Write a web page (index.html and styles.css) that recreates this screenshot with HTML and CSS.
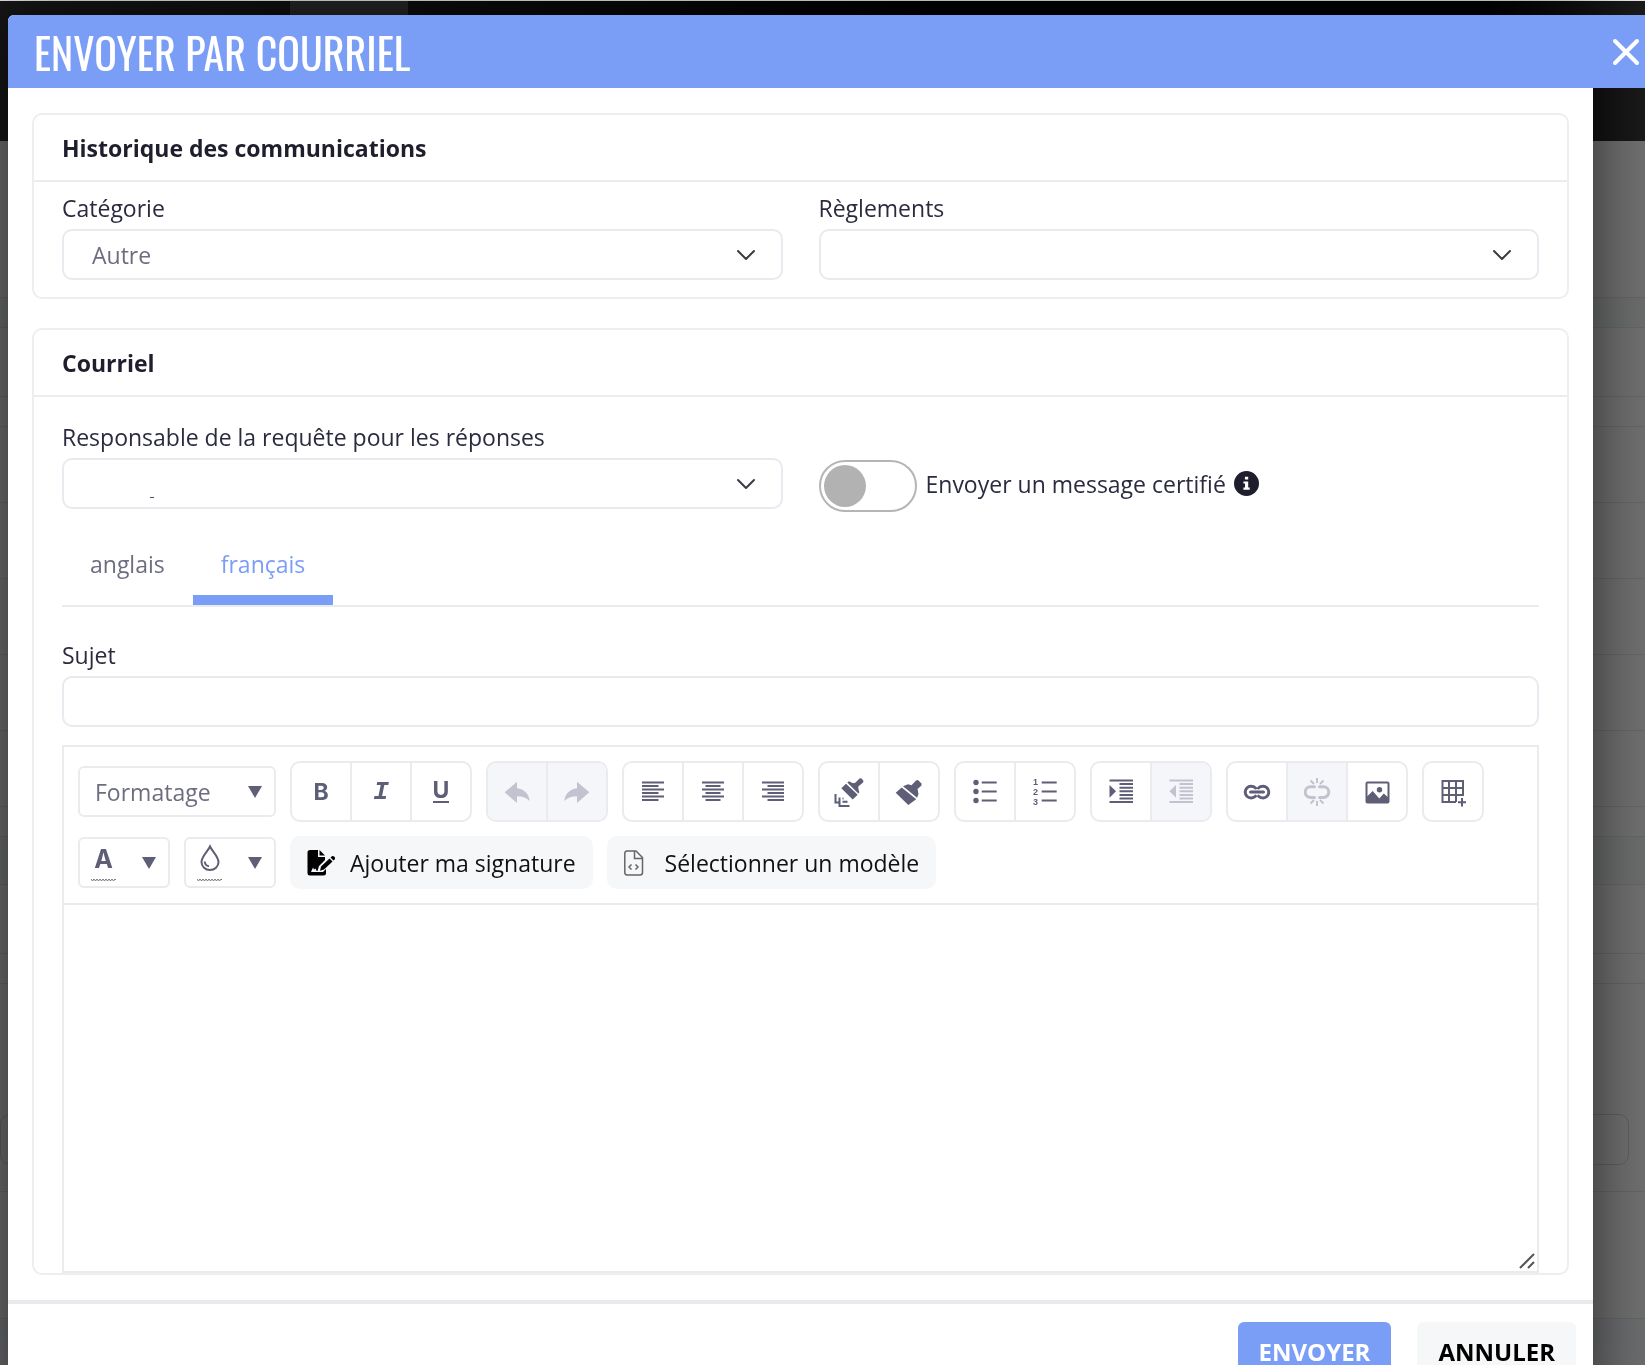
FILE: index.html
```html
<!DOCTYPE html>
<html lang="fr">
<head>
  <meta charset="UTF-8">
  <meta name="viewport" content="width=device-width, initial-scale=1.0">
  <title>Envoyer par courriel</title>
  <link rel="stylesheet" href="styles.css">
</head>
<body>
  <!-- ======= Page behind the modal ======= -->
  <div class="backdrop" aria-hidden="true">
    <div class="backdrop-nav"><div class="backdrop-photo"></div></div>
    <div class="backdrop-row tall"></div>
    <div class="backdrop-row gap"></div>
    <div class="backdrop-row head"></div>
    <div class="backdrop-row thin"></div>
    <div class="backdrop-row"></div>
    <div class="backdrop-row"></div>
    <div class="backdrop-row"></div>
    <div class="backdrop-row"></div>
    <div class="backdrop-row"></div>
    <div class="backdrop-row thin"></div>
    <div class="backdrop-row gap wide"></div>
    <div class="backdrop-row head"></div>
    <div class="backdrop-row thin"></div>
    <div class="backdrop-row form"><div class="backdrop-field"></div></div>
    <div class="backdrop-row big"></div>
    <div class="backdrop-row gap rest"></div>
  </div>

  <!-- ======= Modal ======= -->
  <div class="modal" role="dialog" aria-labelledby="modalTitle">
    <header class="modal-header">
      <h1 id="modalTitle">ENVOYER PAR COURRIEL</h1>
      <button class="close-btn" type="button" aria-label="Fermer">
        <svg width="28" height="28" viewBox="0 0 28 28"><path d="M3 3l22 22M25 3L3 25"/></svg>
      </button>
    </header>

    <form class="modal-form">
      <div class="modal-body">
        <!-- Historique -->
        <section class="card">
          <h2 class="card-header">Historique des communications</h2>
          <div class="card-body compact">
            <div class="row">
              <div class="field">
                <label for="categorie">Catégorie</label>
                <div class="select-wrap">
                  <select id="categorie"><option>Autre</option></select>
                  <svg class="chevron" width="20" height="12" viewBox="0 0 20 12"><path d="M2 2l8 8 8-8"/></svg>
                </div>
              </div>
              <div class="field">
                <label for="reglements">Règlements</label>
                <div class="select-wrap">
                  <select id="reglements"><option></option></select>
                  <svg class="chevron" width="20" height="12" viewBox="0 0 20 12"><path d="M2 2l8 8 8-8"/></svg>
                </div>
              </div>
            </div>
          </div>
        </section>

        <!-- Courriel -->
        <section class="card">
          <h2 class="card-header">Courriel</h2>
          <div class="card-body">
            <div class="row">
              <div class="field">
                <label for="responsable">Responsable de la requête pour les réponses</label>
                <div class="select-wrap">
                  <select id="responsable"><option></option></select>
                  <span class="select-mark"></span>
                  <svg class="chevron" width="20" height="12" viewBox="0 0 20 12"><path d="M2 2l8 8 8-8"/></svg>
                </div>
              </div>
              <div class="switch-field">
                <input class="switch" type="checkbox" id="certifie">
                <label for="certifie">Envoyer un message certifié</label>
                <svg class="info" width="25" height="25" viewBox="0 0 25 25">
                  <circle cx="12.500" cy="12.500" r="12.500" fill="#1e1e2d"/>
                  <path d="M10.900 5.800h3.300v2.800h-3.300zM9.400 10.400h4.800v6.200h1.500v2.200H9.400v-2.200h1.600v-4H9.400z" fill="#fff"/>
                </svg>
              </div>
            </div>

            <div class="tabs" role="tablist">
              <button class="tab" type="button" role="tab" aria-selected="false">anglais</button>
              <button class="tab active" type="button" role="tab" aria-selected="true">français</button>
            </div>

            <div class="field subject">
              <label for="sujet">Sujet</label>
              <input class="text-input" type="text" id="sujet">
            </div>

            <!-- Éditeur -->
            <div class="editor">
              <div class="toolbar">
                <button class="tool-drop format" type="button"><span>Formatage</span><i class="caret"></i></button>

                <div class="tool-group">
                  <button type="button" class="letter bold" aria-label="Gras">B</button>
                  <button type="button" class="letter italic" aria-label="Italique">I</button>
                  <button type="button" class="letter underline" aria-label="Souligné"><span>U</span></button>
                </div>

                <div class="tool-group">
                  <button type="button" disabled aria-label="Annuler l'action">
                    <svg class="icon" viewBox="0 0 30 30"><path class="fill" d="M2.700 15.300L15 4.700v6.600c7 .7 12 5.700 12.700 12.700-3.700-3.500-7.700-4.700-12.700-4.700V26z"/></svg>
                  </button>
                  <button type="button" disabled aria-label="Rétablir">
                    <svg class="icon" viewBox="0 0 30 30"><path class="fill" d="M27.300 15.300L15 4.700v6.600C8 12 3 17 2.300 24 6 20.500 10 19.300 15 19.300V26z"/></svg>
                  </button>
                </div>

                <div class="tool-group">
                  <button type="button" aria-label="Aligner à gauche">
                    <svg class="icon" viewBox="0 0 30 30"><path d="M4 5.500h22M4 9h16.500M4 12.500h22M4 16h16.500M4 19.500h22M4 23h16.500"/></svg>
                  </button>
                  <button type="button" aria-label="Centrer">
                    <svg class="icon" viewBox="0 0 30 30"><path d="M4 5.500h22M7.500 9h15M4 12.500h22M7.500 16h15M4 19.500h22M7.500 23h15"/></svg>
                  </button>
                  <button type="button" aria-label="Aligner à droite">
                    <svg class="icon" viewBox="0 0 30 30"><path d="M4 5.500h22M9.500 9H26M4 12.500h22M9.500 16H26M4 19.500h22M9.500 23H26"/></svg>
                  </button>
                </div>

                <div class="tool-group">
                  <button type="button" aria-label="Copier la mise en forme">
                    <svg class="icon" viewBox="0 0 30 30">
                      <path class="fill" d="M7.300 11.300L12 6.800l11.700 11-5 4.800zM13.300 5.600L15 4.300l4 2 2.300-.6 4.200-4.200 1.800-.2 2 2.300v1.600l-5 4.400.2 3 .8 2.600-1 1.400z"/>
                      <path d="M1.500 17v8.500h4M5.500 20.500V29h10M8.500 21.500h1M8.500 24.800h5"/>
                    </svg>
                  </button>
                  <button type="button" aria-label="Appliquer la mise en forme">
                    <svg class="icon" viewBox="0 0 30 30">
                      <path class="fill" d="M1.700 15.800l6-5.300 14.500 11.700-7.900 5.800zM9 9.300l5-2 3.500 1L22 3.400l2-.5 3.500 3.500v2l-4 3.500 1 5-1.400 3.800z"/>
                    </svg>
                  </button>
                </div>

                <div class="tool-group">
                  <button type="button" aria-label="Liste à puces">
                    <svg class="icon" viewBox="0 0 30 30">
                      <circle class="fill" cx="6" cy="5.500" r="2.700"/><circle class="fill" cx="6" cy="14.500" r="2.700"/><circle class="fill" cx="6" cy="23.500" r="2.700"/>
                      <path d="M11.700 5.500h15M11.700 14.500h15M11.700 23.500h15"/>
                    </svg>
                  </button>
                  <button type="button" aria-label="Liste numérotée">
                    <svg class="icon" viewBox="0 0 30 30">
                      <text x="3" y="8">1</text><text x="3" y="18">2</text><text x="3" y="28">3</text>
                      <path d="M11.700 5.500h15M11.700 14.500h15M11.700 23.500h15"/>
                    </svg>
                  </button>
                </div>

                <div class="tool-group">
                  <button type="button" aria-label="Augmenter le retrait">
                    <svg class="icon" viewBox="0 0 30 30">
                      <path d="M3.500 3.500H27M13.500 7H27M13.500 10.700H27M13.500 14.300H27M13.500 18H27M13.500 21.500H27M3.500 25H27"/>
                      <path class="fill" d="M3.500 8l6.500 6.300-6.500 6.400z"/>
                    </svg>
                  </button>
                  <button type="button" disabled aria-label="Diminuer le retrait">
                    <svg class="icon" viewBox="0 0 30 30">
                      <path d="M3.500 3.500H27M13.500 7H27M13.500 10.700H27M13.500 14.300H27M13.500 18H27M13.500 21.500H27M3.500 25H27"/>
                      <path class="fill" d="M10 8l-6.500 6.300 6.500 6.400z"/>
                    </svg>
                  </button>
                </div>

                <div class="tool-group">
                  <button type="button" aria-label="Insérer un lien">
                    <svg class="icon" viewBox="0 0 30 30">
                      <path class="thick" d="M13.500 11C12 9.500 10.800 9.300 9 9.300a5.800 5.800 0 0 0 0 11.600c1.800 0 3-.2 4.500-1.700M16.500 11c1.500-1.500 2.700-1.700 4.500-1.700a5.800 5.800 0 0 1 0 11.600c-1.800 0-3-.2-4.500-1.700M8.500 15.100h13"/>
                    </svg>
                  </button>
                  <button type="button" disabled aria-label="Supprimer le lien">
                    <svg class="icon" viewBox="0 0 30 30">
                      <path class="thick" d="M12.500 9.800H8.500a5.300 5.300 0 0 0 0 10.600h4M17.500 9.800h4a5.300 5.300 0 0 1 0 10.600h-4"/>
                      <path d="M15 1v5M8.500 3.500L12 7M21.500 3.500L18 7M15 24v5M8.500 26.500L12 23M21.500 26.500L18 23"/>
                    </svg>
                  </button>
                  <button type="button" aria-label="Insérer une image">
                    <svg class="icon" viewBox="0 0 30 30">
                      <rect x="4.500" y="5.500" width="22" height="20" rx="1"/>
                      <circle class="fill" cx="17.500" cy="12.700" r="2.700"/>
                      <path class="fill" d="M4 20.500l6.700-6.500 6.600 7.500 4.500-5 5 4.500v5H4z"/>
                    </svg>
                  </button>
                </div>

                <div class="tool-group">
                  <button type="button" aria-label="Insérer un tableau">
                    <svg class="icon" viewBox="0 0 30 30">
                      <path d="M18 25H4.500V4H25v14H4.500M4.500 11H25M11 4v21M18 4v21M24 21v8.500M20 25.300h8"/>
                    </svg>
                  </button>
                </div>

                <button class="tool-drop color" type="button" aria-label="Couleur du texte">
                  <span class="swatch">
                    <b>A</b>
                    <svg class="wave" width="25" height="4" viewBox="0 0 25 4"><path d="M0 1l1.500 2L3 1l1.500 2L6 1l1.500 2L9 1l1.500 2L12 1l1.500 2L15 1l1.500 2L18 1l1.500 2L21 1l1.500 2L24 1l1 1"/></svg>
                  </span>
                  <i class="caret"></i>
                </button>
                <button class="tool-drop color" type="button" aria-label="Couleur de fond">
                  <span class="swatch">
                    <svg class="drop" width="22" height="28" viewBox="0 0 22 28"><path d="M11 2.500C9 7 2.500 12.500 2.500 18a8.500 8 0 0 0 17 0C19.500 12.500 13 7 11 2.500zM5.700 17.500c.3 2.700 1.800 4.500 4.300 4.800"/></svg>
                    <svg class="wave" width="25" height="4" viewBox="0 0 25 4"><path d="M0 1l1.500 2L3 1l1.500 2L6 1l1.500 2L9 1l1.500 2L12 1l1.500 2L15 1l1.500 2L18 1l1.500 2L21 1l1.500 2L24 1l1 1"/></svg>
                  </span>
                  <i class="caret"></i>
                </button>

                <button class="tool-text" type="button">
                  <svg width="28" height="26" viewBox="0 0 28 26">
                    <path d="M3 0h8v7h7v3l-6 6-1.500 5-1-.2-1-2.300-1.500 1-1-2L4 22h12l3-3v4a2.500 2.500 0 0 1-2.500 2.500H3A2.500 2.500 0 0 1 .5 23V2.500A2.500 2.500 0 0 1 3 0z"/>
                    <path d="M12.500 0L18 5.500h-5.500zM22.500 8.500l3 3-8.500 8-4 1.200 1-4.200zM23.500 7.500L25 6.200c1.500-1 4 1.500 2.800 3l-1.300 1.300z"/>
                  </svg>
                  <span>Ajouter ma signature</span>
                </button>
                <button class="tool-text" type="button">
                  <svg width="26" height="26" viewBox="0 0 26 26" class="file">
                    <path d="M12 1H3A2.500 2.500 0 0 0 .8 3.500v19A2.500 2.500 0 0 0 3 25h13a2.500 2.500 0 0 0 2.500-2.500V7.500zM10.500 1v7.500h8M7.500 14.500L5 17l2.500 2.500M11.500 14.500l2.500 2.500-2.500 2.500"/>
                  </svg>
                  <span>Sélectionner un modèle</span>
                </button>
              </div>

              <div class="editor-area">
                <textarea aria-label="Message"></textarea>
                <svg class="resizer" width="18" height="18" viewBox="0 0 18 18"><path d="M2 16L16 2M10 16l6-6"/></svg>
              </div>
            </div>
          </div>
        </section>
      </div>

      <footer class="modal-footer">
        <button class="btn btn-primary" type="button">ENVOYER</button>
        <button class="btn btn-light" type="button">ANNULER</button>
      </footer>
    </form>
  </div>
</body>
</html>
```
FILE: styles.css
```css
/* ======= Reset & base ======= */
* {
  box-sizing: border-box;
  margin: 0;
  padding: 0;
}

html, body {
  height: 100%;
  overflow: hidden;
}
body {
  font-family: "Segoe UI", "Open Sans", "Noto Sans", sans-serif;
  font-size: 23px;
  line-height: 30px;
  color: #2b2b40;
  background: #6f6f6f;
}
button, input, select, textarea {
  font: inherit;
  color: inherit;
}
button {
  border: none;
  background: none;
  cursor: pointer;
}

/* ======= Page behind the modal ======= */
.backdrop {
  position: fixed;
  inset: 0;
  overflow: hidden;
}
.backdrop-nav {
  height: 141px;
  background: linear-gradient(90deg, #161616 0, #000 60%, #000 90%, #1a1a1a 100%);
  border-top: 1px solid #e4e4e0;
}
.backdrop-photo {
  width: 118px;
  height: 14px;
  margin-left: 290px;
  background: #262626;
}
.backdrop-row {
  height: 76px;
  border-bottom: 1px solid #656565;
}
.backdrop-row.tall { height: 157px; }
.backdrop-row.head { height: 69px; }
.backdrop-row.thin { height: 30px; }
.backdrop-row.gap { height: 30px; background: #6b6d6d; }
.backdrop-row.gap.wide { height: 48px; }
.backdrop-row.form { height: 208px; padding: 130px 16px 0 0; }
.backdrop-row.big { height: 127px; }
.backdrop-row.gap.rest { height: 60px; background: #6b6c6e; }
.backdrop-field {
  height: 51px;
  border: 1px solid #5f5f5f;
  border-radius: 10px;
}

/* ======= Modal ======= */
.modal {
  position: relative;
  margin: 15px 52px 0 8px;
  background: #fff;
  border-radius: 6px 0 0 0;
  box-shadow: 0 0 60px rgba(0, 0, 0, 0.6);
}
.modal-header {
  display: flex;
  align-items: center;
  justify-content: space-between;
  height: 73px;
  margin-right: -52px;
  padding: 0 5px 0 26px;
  background: #7a9df6;
  border-radius: 6px 0 0 0;
  color: #fff;
}
.modal-header h1 {
  font-family: Oswald, "Open Sans Condensed", "Roboto Condensed", "Liberation Sans Narrow", sans-serif;
  font-size: 42px;
  font-weight: 400;
  line-height: 60px;
}
.close-btn {
  display: flex;
}
.close-btn svg {
  fill: none;
  stroke: #fff;
  stroke-width: 4;
  stroke-linecap: round;
}
.modal-body {
  padding: 25px 24px;
}

/* ======= Cards ======= */
.card {
  border: 2px solid #eeeef0;
  border-radius: 10px;
}
.card + .card {
  margin-top: 29px;
}
.card-header {
  padding: 18px 28px 17px;
  border-bottom: 2px solid #ebebf0;
  font-size: 23px;
  font-weight: 700;
  color: #1e1e2d;
}
.card-body {
  padding: 25px 28px 0;
}
.card-body.compact {
  padding: 11px 28px 17px;
}

/* ======= Fields ======= */
.row {
  display: grid;
  grid-template-columns: 1fr 1fr;
  gap: 36px;
}
.field label {
  display: block;
  margin-bottom: 6px;
}
.select-wrap {
  position: relative;
}
select, .text-input {
  display: block;
  width: 100%;
  height: 51px;
  border: 2px solid #e9e9f0;
  border-radius: 10px;
  background: #fff;
  color: #6d6d80;
  padding: 0 28px;
  appearance: none;
}
.chevron {
  position: absolute;
  right: 27px;
  top: 20px;
  fill: none;
  stroke: #3a3a42;
  stroke-width: 2;
  stroke-linecap: round;
  stroke-linejoin: round;
  pointer-events: none;
}
.select-mark {
  position: absolute;
  left: 88px;
  top: 39px;
  width: 4px;
  height: 1px;
  background: #55555f;
}

/* ======= Switch ======= */
.switch-field {
  display: flex;
  align-items: center;
  padding-top: 38px;
}
.switch {
  width: 98px;
  height: 52px;
  margin-right: 9px;
  padding: 3px;
  border: 2px solid #b5b5b5;
  border-radius: 26px;
  background: #fff;
  appearance: none;
}
.switch::before {
  content: "";
  display: block;
  width: 42px;
  height: 42px;
  border-radius: 50%;
  background: #b2b2b2;
}
.switch:checked::before {
  margin-left: auto;
  background: #7a9df6;
}
.switch-field label,
.info {
  margin-bottom: 5px;
}
.info {
  margin-left: 8px;
}

/* ======= Tabs ======= */
.tabs {
  display: flex;
  margin-top: 17px;
  border-bottom: 2px solid #ebebed;
}
.tab {
  padding: 20px 28px 16px;
  border-bottom: 10px solid transparent;
  color: #6d6d80;
}
.tab.active {
  color: #7a9df6;
  border-color: #7a9df6;
}
.subject {
  margin-top: 33px;
}

/* ======= Editor ======= */
.editor {
  margin-top: 18px;
  border: 2px solid #ebebef;
}
.toolbar {
  display: flex;
  flex-wrap: wrap;
  align-items: center;
  gap: 14px;
  padding: 14px;
  border-bottom: 2px solid #ebebed;
  color: #5e5e77;
}
.tool-group {
  display: flex;
  height: 61px;
  border: 2px solid #ebebef;
  border-radius: 10px;
  overflow: hidden;
}
.tool-group button {
  display: flex;
  align-items: center;
  justify-content: center;
  width: 58px;
}
.tool-group button + button {
  width: 60px;
  border-left: 2px solid #ebebef;
}
.tool-group button:disabled {
  background: #f5f6f9;
  color: #c3c3cf;
  cursor: default;
}
.letter.bold,
.letter.underline {
  font-family: Inter, "Liberation Sans", sans-serif;
  font-weight: 700;
}
.letter.italic {
  font-family: "Liberation Mono", monospace;
  font-size: 26px;
  font-style: italic;
  font-weight: 700;
}
.letter.underline span {
  border-bottom: 2px solid currentColor;
  line-height: 21px;
}
.icon {
  width: 30px;
  height: 30px;
  fill: none;
  stroke: currentColor;
  stroke-width: 2;
}
.icon .fill {
  fill: currentColor;
  stroke: none;
}
.icon .thick {
  stroke-width: 3;
  stroke-linecap: round;
}
.icon text {
  fill: currentColor;
  stroke: none;
  font-family: "Liberation Sans", sans-serif;
  font-size: 9px;
  font-weight: 700;
}
.tool-drop {
  display: flex;
  align-items: center;
  justify-content: space-between;
  height: 51px;
  padding: 0 12px 0 15px;
  border: 2px solid #ebebef;
  border-radius: 6px;
}
.tool-drop.format {
  width: 198px;
  color: #6d6d80;
}
.tool-drop.color {
  width: 92px;
  padding-left: 11px;
}
.caret {
  border: 7px solid transparent;
  border-top: 12px solid #5e5e77;
  border-bottom: none;
}
.swatch {
  display: flex;
  flex-direction: column;
  align-items: center;
  justify-content: space-between;
  width: 25px;
  height: 38px;
}
.swatch b {
  font-family: Inter, "Liberation Sans", sans-serif;
  font-size: 25px;
}
.drop, .wave {
  fill: none;
  stroke: #5e5e77;
  stroke-width: 2;
}
.wave {
  stroke: #777;
  stroke-width: 1;
}
.tool-text {
  display: flex;
  align-items: center;
  gap: 15px;
  height: 53px;
  padding: 0 17px;
  border-radius: 10px;
  background: #f6f7f9;
  color: #111;
}
.tool-text .file {
  fill: none;
  stroke: #66666a;
  stroke-width: 1.5;
}
.editor-area {
  position: relative;
}
.editor-area textarea {
  display: block;
  width: 100%;
  height: 366px;
  padding: 14px;
  border: none;
  outline: none;
  resize: none;
}
.resizer {
  position: absolute;
  right: 1px;
  bottom: 1px;
  fill: none;
  stroke: #555;
  stroke-width: 2;
}

/* ======= Footer ======= */
.modal-footer {
  display: flex;
  justify-content: flex-end;
  gap: 26px;
  padding: 18px 17px 25px;
  border-top: 4px solid #e9eaee;
}
.btn {
  height: 60px;
  padding: 0 21px;
  border-radius: 6px;
  font-size: 24px;
  font-weight: 700;
}
.btn-primary {
  background: #7a9df6;
  color: #fff;
}
.btn-light {
  background: #f6f7f9;
  color: #000;
}
```
